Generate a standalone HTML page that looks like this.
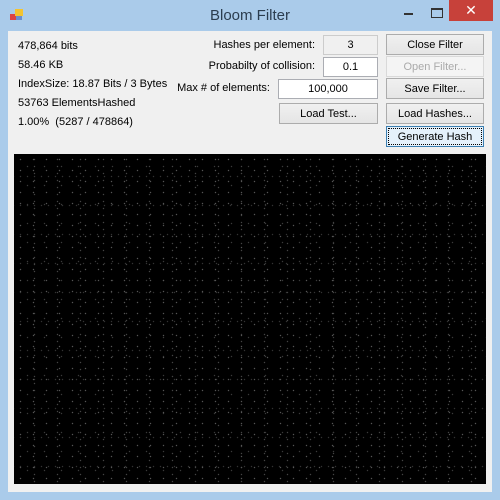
<!DOCTYPE html>
<html><head><style>
*{margin:0;padding:0;box-sizing:border-box}
body{width:500px;height:500px;background:#aacbea;position:relative;overflow:hidden;font-family:"Liberation Sans",sans-serif;font-size:11px;color:#000}
.t{position:absolute;top:7px;left:0;width:500px;text-align:center;font-size:15px;color:#2b3d4f}
.client{position:absolute;left:8px;top:31px;width:484px;height:461px;background:#f0f0f0}
.l{position:absolute;white-space:nowrap}
.r{position:absolute;white-space:nowrap;text-align:right}
.btn{position:absolute;border:1px solid #acacac;background:linear-gradient(#f0f0f0,#e5e5e5);text-align:center;line-height:20px;height:21px}
.in{position:absolute;border:1px solid #abadb3;background:#fff;text-align:center;line-height:19px;height:20px}
.black{position:absolute;left:14px;top:154px;width:472px;height:330px;background:#000;
background-image:
radial-gradient(circle,#555 0.5px,transparent 0.9px),
radial-gradient(circle,#3a3a3a 0.5px,transparent 0.9px),
radial-gradient(circle,#444 0.5px,transparent 0.9px),
radial-gradient(circle,#333 0.5px,transparent 0.9px);
background-size:13px 11px,17px 19px,23px 7px,7px 29px;
background-position:0 0,5px 3px,9px 2px,3px 8px}
</style></head><body>
<svg style="position:absolute;left:10px;top:9px" width="14" height="12"><rect x="0" y="5" width="6" height="6" fill="#d44"/><rect x="5" y="0" width="8" height="7" fill="#f4c430"/><rect x="6" y="7" width="6" height="4" fill="#6a8fd0"/></svg>
<div class="t">Bloom Filter</div>
<div style="position:absolute;left:404px;top:13px;width:9px;height:2px;background:#333"></div>
<div style="position:absolute;left:431px;top:8px;width:12px;height:10px;border:1px solid #333;border-top-width:2px"></div>
<div style="position:absolute;left:449px;top:0;width:44px;height:21px;background:#c7413a;color:#fff;text-align:center;font-size:14px;line-height:21px">&#10005;</div>
<div class="client"></div>
<div class="l" style="left:18px;top:40px">478,864 bits</div>
<div class="l" style="left:18px;top:59px">58.46 KB</div>
<div class="l" style="left:18px;top:78px">IndexSize: 18.87 Bits / 3 Bytes</div>
<div class="l" style="left:18px;top:97px">53763 ElementsHashed</div>
<div class="l" style="left:18px;top:116px">1.00%&nbsp; (5287 / 478864)</div>
<div class="r" style="right:185px;top:39px">Hashes per element:</div>
<div class="r" style="right:185px;top:60px">Probabilty of collision:</div>
<div class="r" style="right:230px;top:82px">Max # of elements:</div>
<div class="in" style="left:323px;top:35px;width:55px;background:#f0f0f0;border-color:#ccc">3</div>
<div class="in" style="left:323px;top:57px;width:55px">0.1</div>
<div class="in" style="left:278px;top:79px;width:100px">100,000</div>
<div class="btn" style="left:279px;top:103px;width:99px">Load Test...</div>
<div class="btn" style="left:386px;top:34px;width:98px">Close Filter</div>
<div class="btn" style="left:386px;top:56px;width:98px;color:#aaa;border-color:#d9d9d9;background:#f4f4f4">Open Filter...</div>
<div class="btn" style="left:386px;top:78px;width:98px">Save Filter...</div>
<div class="btn" style="left:386px;top:103px;width:98px">Load Hashes...</div>
<div class="btn" style="left:386px;top:126px;width:98px;border-color:#3c7fb1;background:#e5f1fb;outline:1px dotted #000;outline-offset:-3px">Generate Hash</div>
<div class="black"></div>
</body></html>
